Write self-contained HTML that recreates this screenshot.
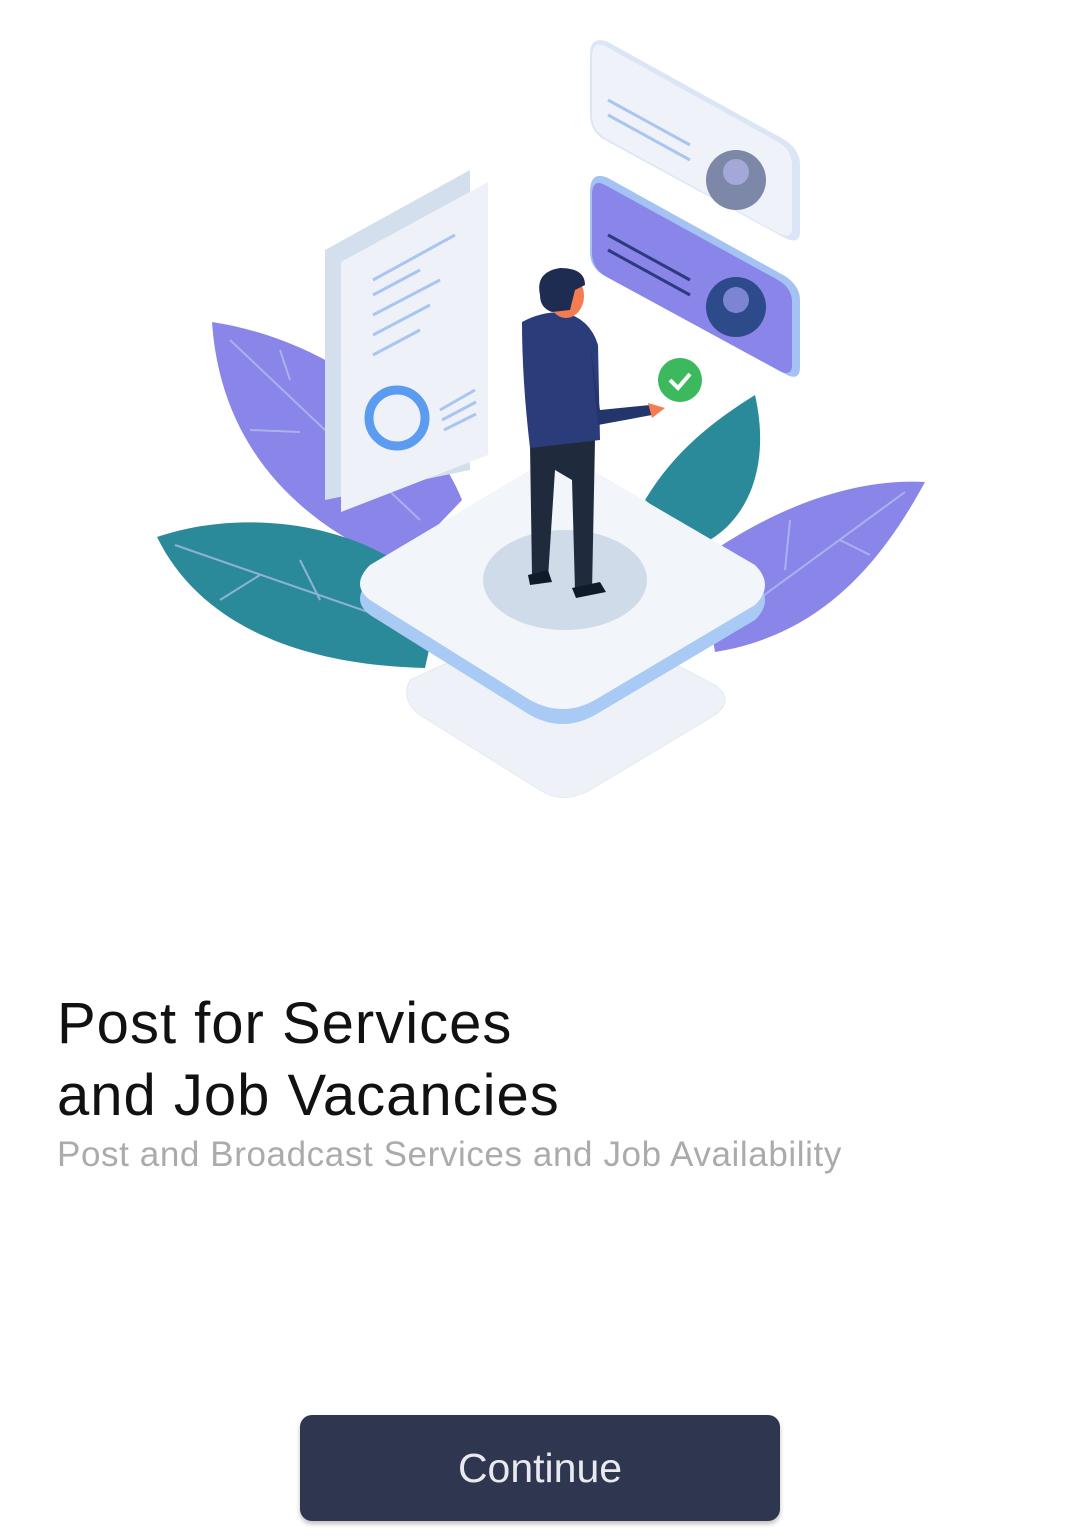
<!DOCTYPE html>
<html><head><meta charset="utf-8"><style>
html,body{margin:0;padding:0;background:#fff;width:1080px;height:1538px;overflow:hidden;font-family:"Liberation Sans",sans-serif}
svg{position:absolute;left:0;top:0}
.t{position:absolute;left:57px;top:988px;font-size:58px;line-height:72px;color:#111;letter-spacing:1px}
.s{position:absolute;left:57px;top:1135px;font-size:35px;color:#ababab;letter-spacing:0.6px}
.b{position:absolute;left:300px;top:1415px;width:480px;height:106px;border-radius:12px;background:#2e3650;color:#e9e9ef;font-size:41px;line-height:106px;text-align:center;box-shadow:0 3px 5px rgba(0,0,0,.25)}
</style></head><body>
<svg width="1080" height="820" viewBox="0 0 1080 820">
<path d="M212,322 C330,340 430,420 462,500 L400,565 C290,520 220,440 212,322Z" fill="#8a85e8"/>
<path d="M157,537 C250,505 380,525 440,600 L425,668 C300,665 200,625 157,537Z" fill="#2b8a9a"/>
<path d="M755,395 C772,470 745,525 700,545 L645,500 C675,450 715,420 755,395Z" fill="#2b8a9a"/>
<path d="M925,482 C880,565 820,635 715,652 L700,560 C770,510 850,478 925,482Z" fill="#8a85e8"/>
<g stroke="#b9c3f0" stroke-width="2" fill="none" opacity=".7">
<path d="M230,340 L420,520 M250,430 L300,432 M290,380 L280,350"/>
<path d="M175,545 L420,630 M220,600 L260,575 M300,560 L320,600"/>
<path d="M905,492 L730,620 M790,520 L785,570 M840,540 L870,555"/>
</g>
<path d="M325,250 L470,170 L470,470 L325,500Z" fill="#d4dfee"/>
<path d="M341,262 L488,182 L488,455 L341,512Z" fill="#eef2f8"/>
<g stroke="#a9c6f2" stroke-width="3">
<path d="M373,280 L455,235 M373,295 L420,270 M373,315 L440,280 M373,335 L430,305 M373,355 L420,330 M440,410 L475,390 M442,420 L476,402 M444,430 L476,414"/>
</g>
<circle cx="397" cy="418" r="28" fill="none" stroke="#5b9cf0" stroke-width="9"/>
<path d="M608,42 L785,140 Q800,150 800,165 L800,232 Q800,245 785,238 L605,140 Q590,132 590,115 L590,55 Q590,35 608,42Z" fill="#dbe5f5"/>
<path d="M605,46 L778,142 Q792,150 792,165 L792,228 Q792,240 778,233 L605,138 Q592,130 592,115 L592,58 Q592,40 605,46Z" fill="#eff3f9"/>
<path d="M608,100 L690,145 M608,115 L690,160" stroke="#a9c6f2" stroke-width="3"/>
<circle cx="736" cy="180" r="30" fill="#7d87a8"/><circle cx="736" cy="172" r="13" fill="#a4a8d8"/>
<path d="M608,178 L785,276 Q800,286 800,300 L800,367 Q800,382 785,374 L605,276 Q590,268 590,252 L590,192 Q590,170 608,178Z" fill="#a4c3f4"/>
<path d="M605,185 L778,280 Q792,288 792,302 L792,365 Q792,378 778,370 L605,276 Q592,268 592,252 L592,195 Q592,178 605,185Z" fill="#8a85e8"/>
<path d="M608,235 L690,280 M608,250 L690,295" stroke="#2d3a80" stroke-width="3"/>
<circle cx="736" cy="307" r="30" fill="#2d4a8a"/><circle cx="736" cy="300" r="13" fill="#7c85d4"/>
<circle cx="680" cy="380" r="22" fill="#3cb95c"/><path d="M670,380 L678,388 L690,374" stroke="#fff" stroke-width="4" fill="none"/>
<path d="M410,680 Q400,700 420,715 L540,790 Q563,805 590,790 L715,715 Q735,700 715,685 L590,620 Q563,605 540,620Z" fill="#eef2f8" stroke="#e3e9f1"/>
<path d="M370,615 Q350,600 370,580 L530,480 Q560,462 592,480 L755,580 Q775,600 755,620 L595,715 Q563,733 530,715Z" fill="#a8caf4"/>
<path d="M370,600 Q350,585 370,565 L530,470 Q560,452 592,470 L755,565 Q775,585 755,605 L595,700 Q563,718 530,700Z" fill="#f2f5fa"/>
<ellipse cx="565" cy="580" rx="82" ry="50" fill="#cfdbe9"/>
<path d="M530,445 L532,575 L548,578 L555,470 L572,480 L575,590 L592,592 L595,440Z" fill="#1f2b3d"/>
<path d="M528,575 L548,570 L552,582 L530,585Z M572,588 L600,582 L606,592 L576,598Z" fill="#111a2a"/>
<path d="M522,322 Q540,312 562,312 Q590,318 598,345 L600,440 L530,448 Q522,380 522,322Z" fill="#2a3d7a"/>
<path d="M590,345 L600,410 L650,405 L652,415 L598,425 Z" fill="#24356c"/>
<path d="M648,403 L665,408 L652,418Z" fill="#f47c50"/>
<ellipse cx="566" cy="296" rx="18" ry="22" fill="#f47c50"/>
<path d="M540,295 Q535,272 560,268 Q585,268 585,285 L575,290 L570,310 L552,312 Q540,308 540,295Z" fill="#1e2c52"/>
</svg>
<div class="t">Post for Services<br>and Job Vacancies</div>
<div class="s">Post and Broadcast Services and Job Availability</div>
<div class="b">Continue</div>
</body></html>
